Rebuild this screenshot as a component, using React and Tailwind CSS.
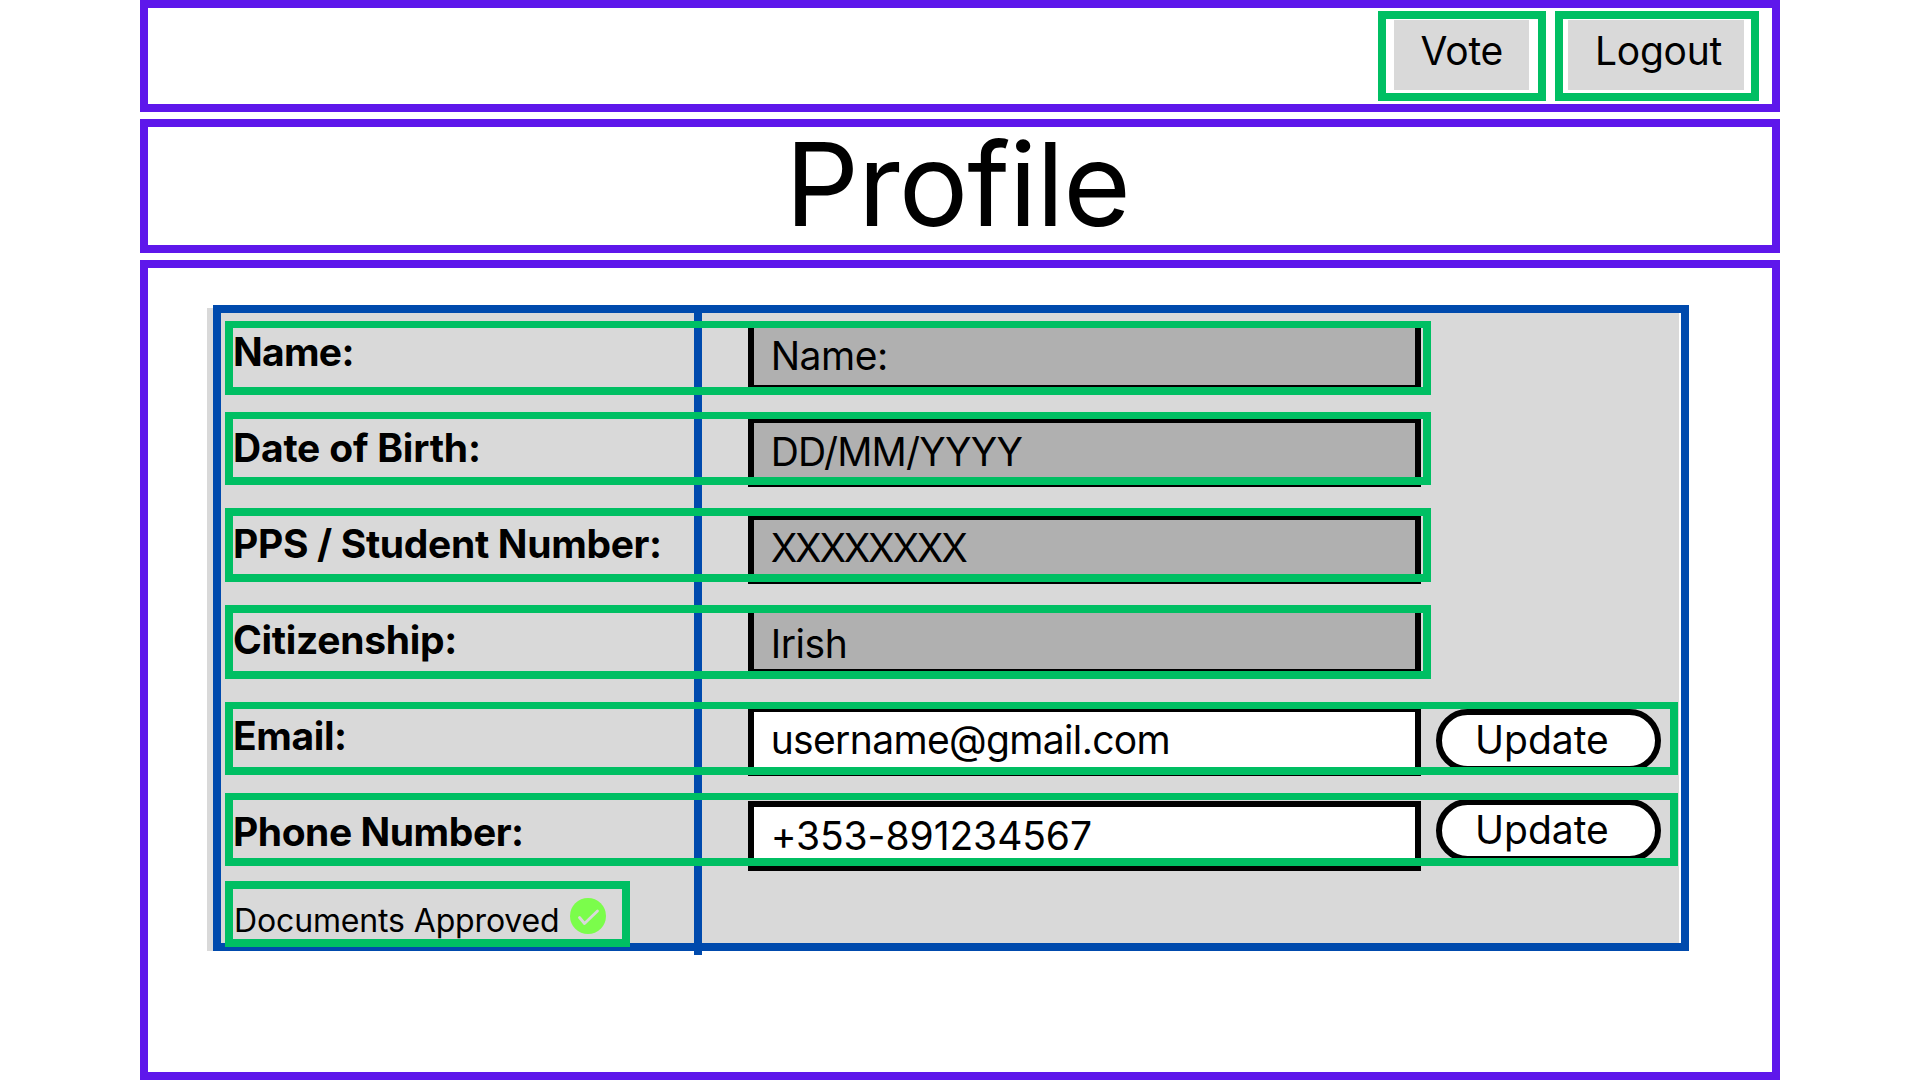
import React from "react";

const rows = [
  {
    label: "Name:", value: "Name:",
    row: "h-[74px]", frame: "border-t-[7px]", labelTop: "mt-[11px] tracking-[-0.7px]", field: "mt-0 bg-[#b0b0b0]", text: "mt-[9px] tracking-[-0.45px]",
  },
  {
    label: "Date of Birth:", value: "DD/MM/YYYY",
    row: "mt-[17px] h-[73px]", frame: "border-t-[7px]", labelTop: "mt-[16px] tracking-[-0.2px]", field: "mt-[5px] bg-[#b0b0b0]", text: "mt-[9px] tracking-[-0.78px]",
  },
  {
    label: "PPS / Student Number:", value: "XXXXXXXX",
    row: "mt-[23px] h-[74px]", frame: "", labelTop: "mt-[16px] tracking-[-0.33px]", field: "mt-[6px] bg-[#b0b0b0]", text: "mt-[8px] tracking-[-2.25px]",
  },
  {
    label: "Citizenship:", value: "Irish",
    row: "mt-[23px] h-[74px]", frame: "", labelTop: "mt-[15px] tracking-[-0.3px]", field: "mt-0 bg-[#b0b0b0]", text: "mt-[13px] tracking-[-0.45px]",
  },
  {
    label: "Email:", value: "username@gmail.com",
    row: "mt-[23px] h-[73px]", frame: "border-t-[7px]", labelTop: "mt-[14px] tracking-[-0.4px]", field: "mt-[4px] bg-white", text: "mt-[8px] tracking-[-0.65px]",
    button: "mt-[7px]",
  },
  {
    label: "Phone Number:", value: "+353-891234567",
    row: "mt-[18px] h-[73px]", frame: "border-t-[7px]", labelTop: "mt-[19px] tracking-[-0.45px]", field: "mt-[8px] bg-white", text: "mt-[9px] tracking-[-0.08px]",
    button: "mt-[6px]",
  },
];

function Frame({ className = "" }) {
  return (
    <div className={`pointer-events-none absolute inset-0 z-10 border-8 border-[#00bf63] ${className}`} />
  );
}

function NavButton({ children, className, inner }) {
  return (
    <div className={`relative h-[90px] ${className}`}>
      <button className={`mt-[9px] block h-[70px] bg-[#d9d9d9] pt-[11px] pb-[19px] text-left text-[39px] leading-10 ${inner}`}>
        {children}
      </button>
      <Frame />
    </div>
  );
}

function ProfileRow({ item }) {
  return (
    <div className={`relative flex items-start ${item.row} ${item.button ? "w-[1453px]" : "w-[1206px]"}`}>
      <div className={`w-[523px] shrink-0 pl-[8px] text-[39px] leading-10 font-bold ${item.labelTop}`}>
        {item.label}
      </div>
      <div className={`h-[70px] w-[673px] shrink-0 border-6 border-black pl-[16.7px] text-[39px] leading-10 ${item.field}`}>
        <div className={item.text}>{item.value}</div>
      </div>
      {item.button && (
        <button
          className={`ml-[15px] flex h-[63px] w-[225px] shrink-0 items-start rounded-full border-6 border-black bg-white pt-[5px] pl-[33px] text-[39px] leading-10 ${item.button}`}
        >
          Update
        </button>
      )}
      <Frame className={item.frame} />
    </div>
  );
}

export default function App() {
  return (
    <div className="flex h-[1080px] w-[1920px] flex-col overflow-hidden bg-white pl-[140px] font-['Inter',sans-serif] text-black">
      <header className="flex h-28 w-[1640px] shrink-0 items-start justify-end gap-[9px] border-8 border-[#5e17eb] pt-[3px] pr-[13px]">
        <NavButton className="w-[168px] pl-[16px]" inner="w-[135px] pl-[26.5px] tracking-[-0.2px]">Vote</NavButton>
        <NavButton className="w-[204px] pl-[13px]" inner="w-[176px] pl-[27px] tracking-[-0.25px]">Logout</NavButton>
      </header>

      <div className="mt-[7px] h-[134px] w-[1640px] shrink-0 border-8 border-[#5e17eb] pl-[637px]">
        <h1 className="-mt-px text-[116px] leading-[116px] tracking-[-1.05px]">Profile</h1>
      </div>

      <main className="mt-[7px] h-[820px] w-[1640px] shrink-0 border-8 border-[#5e17eb] pt-10 pl-[59px]">
        <section className="relative h-[643px] w-[1472px] bg-[#d9d9d9] pt-[13px] pl-[18px]">
          <div className="absolute -top-[3px] left-[6px] h-[646px] w-[1476px] border-8 border-[#004aad]" />
          <div className="absolute top-0 left-[487px] h-[647px] w-2 bg-[#004aad]" />
          {rows.map((item) => (
            <ProfileRow key={item.label} item={item} />
          ))}
          <div className="relative mt-[15px] flex h-[66px] w-[405px] items-start pt-[24px] pl-[9px]">
            <span className="w-[336px] text-[32px] leading-8 tracking-[-0.14px] whitespace-nowrap">Documents Approved</span>
            <svg className="-mt-[7px] size-9" viewBox="0 0 36 36" fill="none">
              <circle cx="18" cy="18" r="18" fill="#7bfd4b" />
              <path d="M9.5 19.5 L14.5 25.5 L27.5 13" stroke="#d9d9d9" strokeWidth="2.8" strokeLinecap="round" strokeLinejoin="round" />
            </svg>
            <Frame />
          </div>
        </section>
      </main>
    </div>
  );
}
